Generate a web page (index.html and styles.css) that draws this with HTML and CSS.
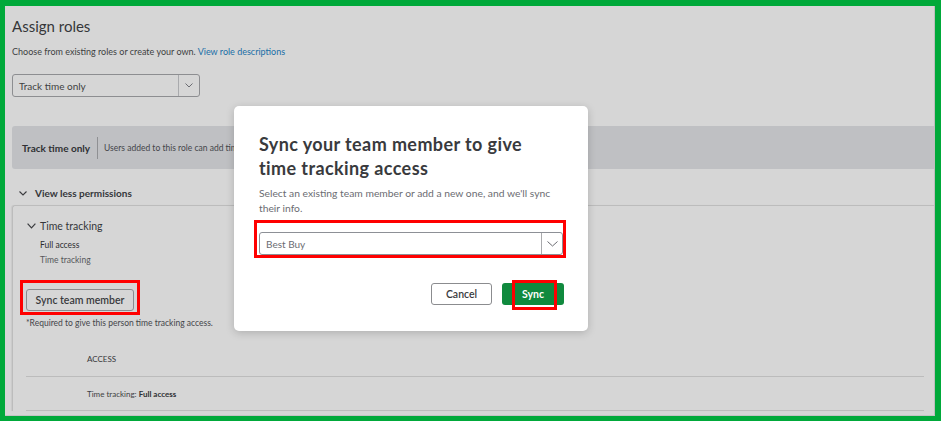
FILE: index.html
```html
<!DOCTYPE html>
<html>
<head>
<meta charset="utf-8">
<link rel="stylesheet" href="styles.css">
</head>
<body>
<div class="frame">
  <div class="page">
    <h1 class="title">Assign roles</h1>
    <p class="intro">Choose from existing roles or create your own. <span class="link">View role descriptions</span></p>
    <div class="select role-select">
      <span class="select-text">Track time only</span>
      <span class="select-btn"><svg width="8" height="5" viewBox="0 0 8 5"><path d="M0.5 0.5 L4 4 L7.5 0.5" fill="none" stroke="#6b6c72" stroke-width="1"/></svg></span>
    </div>
    <div class="banner">
      <span class="banner-title">Track time only</span>
      <span class="banner-sep"></span>
      <span class="banner-text">Users added to this role can add time</span>
    </div>
    <div class="perm-toggle">
      <svg width="8" height="5" viewBox="0 0 8 5"><path d="M0.5 0.5 L4 4 L7.5 0.5" fill="none" stroke="#3a3b3e" stroke-width="1.1"/></svg>
      <span>View less permissions</span>
    </div>
    <div class="perm-box">
      <div class="perm-head">
        <svg width="9" height="6" viewBox="0 0 9 6"><path d="M0.6 0.6 L4.5 4.8 L8.4 0.6" fill="none" stroke="#3a3b3e" stroke-width="1.2"/></svg>
        <span>Time tracking</span>
      </div>
      <div class="perm-level">Full access</div>
      <div class="perm-sub">Time tracking</div>
      <div class="hl hl-sync">
        <button class="btn btn-outline sync-member">Sync team member</button>
      </div>
      <div class="required">*Required to give this person time tracking access.</div>
      <div class="table">
        <div class="row row-head"><span>ACCESS</span></div>
        <div class="row"><span>Time tracking: <b>Full access</b></span></div>
      </div>
    </div>
  </div>

  <div class="modal">
    <h2 class="modal-title">Sync your team member to give time tracking access</h2>
    <p class="modal-text">Select an existing team member or add a new one, and we'll sync their info.</p>
    <div class="hl hl-select">
      <div class="select member-select">
        <span class="select-text">Best Buy</span>
        <span class="select-btn"><svg width="11" height="6" viewBox="0 0 11 6"><path d="M0.5 0.5 L5.5 5 L10.5 0.5" fill="none" stroke="#6b6c72" stroke-width="1"/></svg></span>
      </div>
    </div>
    <div class="modal-actions">
      <button class="btn btn-outline cancel">Cancel</button>
      <button class="btn btn-primary sync">Sync<span class="hl-mark"></span></button>
    </div>
  </div>
</div>
</body>
</html>
```

FILE: styles.css
```css
* { box-sizing: border-box; }
html, body { margin: 0; padding: 0; }
body {
  width: 941px;
  height: 421px;
  overflow: hidden;
  font-family: Lato, "Open Sans", sans-serif;
  color: #333437;
}
.frame {
  position: relative;
  width: 941px;
  height: 421px;
  border-style: solid;
  border-color: #00a93a;
  border-width: 6px 6px 5px 5px;
  background: #d6d6d6;
}
.page {
  height: 100%;
  padding: 11px 0 0 7px;
  border-right: 1px solid #bdbdbd;
  border-bottom: 1px solid #c4c4c4;
  overflow: hidden;
  background: #d6d6d6;
}
.title {
  margin: 0;
  font-size: 15px;
  line-height: 18px;
  font-weight: 400;
  color: #353639;
}
.intro {
  margin: 11px 0 0;
  font-size: 9px;
  line-height: 12px;
  color: #3e3f42;
}
.link { color: #1a6ea6; }
.select {
  display: flex;
  align-items: stretch;
  border: 1px solid #8d8e91;
  border-radius: 3px;
  background: transparent;
}
.select-text {
  flex: 1;
  display: flex;
  align-items: center;
  padding-left: 6px;
  font-size: 10px;
  color: #3e3f42;
}
.select-btn {
  display: flex;
  align-items: center;
  justify-content: center;
  border-left: 1px solid #a9aaad;
}
.role-select {
  margin-top: 16px;
  width: 188px;
  height: 23px;
}
.role-select .select-btn { width: 21px; }
.banner {
  margin-top: 29px;
  height: 43px;
  background: #bfc0c3;
  border-radius: 3px 0 0 3px;
  display: flex;
  align-items: center;
  padding-left: 10px;
}
.banner-title {
  font-size: 10px;
  font-weight: 700;
  color: #2f3033;
}
.banner-sep {
  width: 1px;
  height: 22px;
  background: #8f9093;
  margin: 0 6px 0 7px;
}
.banner-text {
  font-size: 8.5px;
  color: #44454a;
}
.perm-toggle {
  display: flex;
  align-items: center;
  height: 36px;
  padding: 12px 0 0 7px;
  gap: 8px;
  font-size: 10px;
  font-weight: 700;
  color: #35363a;
}
.perm-box {
  border-top: 1px solid #bcbcbc;
  border-left: 1px solid #bcbcbc;
  border-radius: 3px 0 0 0;
  padding: 12px 0 0 13px;
  box-shadow: -1px 0 1px rgba(0,0,0,0.06);
}
.perm-head {
  display: flex;
  align-items: center;
  gap: 4px;
  height: 16px;
  padding-left: 1px;
  font-size: 10.5px;
  color: #35363a;
}
.perm-level {
  margin-top: 4px;
  padding-left: 14px;
  font-size: 8.5px;
  line-height: 15px;
  color: #2c2d30;
}
.perm-sub {
  padding-left: 14px;
  font-size: 8.5px;
  line-height: 15px;
  color: #55565b;
}
.hl {
  border: 3px solid #ff0000;
  display: inline-block;
}
.hl-sync {
  margin: 12px 0 0 -6px;
  padding: 6px 3px 1px 3px;
}
.btn {
  font-family: inherit;
  cursor: default;
  border-radius: 3px;
}
.btn-outline {
  background: transparent;
  border: 1px solid #8b8c8f;
  color: #393a3d;
  font-weight: 600;
}
.sync-member {
  display: block;
  width: 108px;
  height: 22px;
  padding: 0;
  font-size: 10.5px;
}
.required {
  margin-top: 2px;
  font-size: 8.5px;
  line-height: 12px;
  color: #44454a;
}
.table {
  width: 898px;
}
.row {
  height: 34px;
  display: flex;
  align-items: center;
  padding-left: 61px;
  font-size: 8px;
  color: #3e3f42;
  border-bottom: 1px solid #bcbcbc;
}
.row-head {
  height: 48px;
  align-items: flex-start;
  padding-top: 25px;
  line-height: 10px;
  color: #36373a;
}
.row b { font-weight: 700; color: #2f3033; }

.modal {
  position: absolute;
  left: 229px;
  top: 100px;
  width: 354px;
  height: 225px;
  background: #fff;
  border-radius: 5px;
  box-shadow: 0 2px 8px rgba(0,0,0,0.18);
  padding: 26px 0 0 25px;
  color: #393a3d;
}
.modal-title {
  margin: 0;
  width: 300px;
  font-size: 18px;
  line-height: 24px;
  font-weight: 700;
  letter-spacing: 0.4px;
  color: #393a3d;
}
.modal-text {
  margin: 6px 0 0;
  width: 300px;
  font-size: 10.3px;
  line-height: 15px;
  color: #6b6c72;
}
.hl-select {
  display: block;
  margin: 4px 0 0 -5px;
  width: 312px;
  height: 38px;
  padding: 9px 0 0 2px;
}
.member-select {
  width: 304px;
  height: 23px;
  border-color: #8d9096;
}
.member-select .select-text { font-size: 10px; color: #6b6c72; }
.member-select .select-btn { width: 21px; }
.modal-actions {
  display: flex;
  justify-content: flex-end;
  gap: 10px;
  width: 305px;
  margin-top: 25px;
}
.cancel {
  width: 61px;
  height: 22px;
  font-size: 10.5px;
  padding: 0;
}
.btn-primary {
  position: relative;
  width: 62px;
  height: 22px;
  padding: 0;
  border: none;
  background: #108a3e;
  color: #fff;
  font-weight: 700;
  font-size: 10.5px;
}
.hl-mark {
  position: absolute;
  left: 10px;
  top: -3px;
  width: 45px;
  height: 30px;
  border: 3px solid #ff0000;
}
```
